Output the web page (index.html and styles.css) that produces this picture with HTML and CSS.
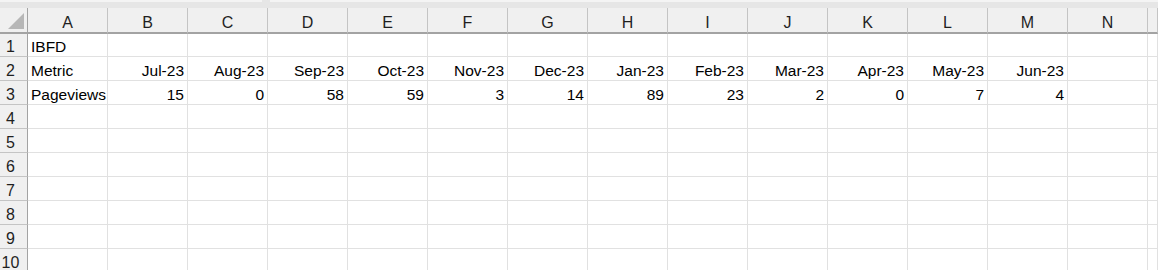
FILE: index.html
```
<!DOCTYPE html>
<html lang="en">
<head>
  <meta charset="UTF-8" />
  <meta name="viewport" content="width=device-width, initial-scale=1" />
  <title>Book1 - Sheet1</title>
  <link rel="stylesheet" href="styles.css">
</head>
<body>
  <div id="toolbar-edge">
    <span class="edge-bar edge-left"></span>
    <span class="edge-bar edge-right"></span>
  </div>

  <table id="sheet">
    <colgroup>
      <col class="col-rowhead" />
      <col /><col /><col /><col /><col /><col /><col />
      <col /><col /><col /><col /><col /><col /><col />
      <col class="col-edge" />
    </colgroup>
    <thead>
      <tr>
        <th class="corner"><span class="select-all"></span></th>
        <th>A</th><th>B</th><th>C</th><th>D</th><th>E</th><th>F</th><th>G</th>
        <th>H</th><th>I</th><th>J</th><th>K</th><th>L</th><th>M</th><th>N</th>
        <th></th>
      </tr>
    </thead>
    <tbody id="rows">
      <tr class="first">
        <th>1</th>
        <td>IBFD</td><td></td><td></td><td></td><td></td><td></td><td></td>
        <td></td><td></td><td></td><td></td><td></td><td></td><td></td><td></td>
      </tr>
      <tr>
        <th>2</th>
        <td>Metric</td>
        <td class="num">Jul-23</td><td class="num">Aug-23</td><td class="num">Sep-23</td>
        <td class="num">Oct-23</td><td class="num">Nov-23</td><td class="num">Dec-23</td>
        <td class="num">Jan-23</td><td class="num">Feb-23</td><td class="num">Mar-23</td>
        <td class="num">Apr-23</td><td class="num">May-23</td><td class="num">Jun-23</td>
        <td></td><td></td>
      </tr>
      <tr>
        <th>3</th>
        <td>Pageviews</td>
        <td class="num">15</td><td class="num">0</td><td class="num">58</td>
        <td class="num">59</td><td class="num">3</td><td class="num">14</td>
        <td class="num">89</td><td class="num">23</td><td class="num">2</td>
        <td class="num">0</td><td class="num">7</td><td class="num">4</td>
        <td></td><td></td>
      </tr>
    </tbody>
  </table>

  <script>
    // empty rows 4-10
    var body = document.getElementById('rows');
    for (var r = 4; r <= 10; r++) {
      var tr = document.createElement('tr');
      var th = document.createElement('th');
      th.textContent = r;
      tr.appendChild(th);
      for (var c = 0; c < 15; c++) {
        tr.appendChild(document.createElement('td'));
      }
      body.appendChild(tr);
    }
  </script>
</body>
</html>
```

FILE: styles.css
```
html, body {
  margin: 0;
  overflow: hidden;
  background: white;
}

body {
  font-family: "Liberation Sans", Arial, sans-serif;
  font-size: 15.5px;
  color: #000;
}

#toolbar-edge {
  height: 8px;
  background: #e6e6e6;
  display: flex;
  gap: 8px;
}

.edge-bar {
  height: 2px;
  background: #f4f4f4;
}

.edge-left {
  width: 262px;
}

.edge-right {
  flex: 1;
}

#sheet {
  border-collapse: separate;
  border-spacing: 0;
  table-layout: fixed;
  width: 1158px;
}

#sheet col {
  width: 80px;
}

#sheet col.col-rowhead {
  width: 28px;
}

#sheet col.col-edge {
  width: 10px;
}

#sheet th,
#sheet td {
  padding: 0 3px;
  line-height: 18px;
  vertical-align: bottom;
  white-space: nowrap;
  overflow: hidden;
  box-sizing: border-box;
}

#sheet thead th {
  height: 26px;
  background: #f0f0f0;
  font-weight: normal;
  font-size: 16px;
  color: #1f1f1f;
  text-align: center;
  border-right: 1px solid #c4c4c4;
  border-bottom: 2px solid #a3a3a3;
}

#sheet tbody th {
  background: #f0f0f0;
  font-weight: normal;
  font-size: 16px;
  color: #1f1f1f;
  text-align: center;
  padding: 0 6px 0 0;
  border-right: 1px solid #a3a3a3;
  border-bottom: 1px solid #c4c4c4;
}

#sheet .corner {
  border-right: 1px solid #a3a3a3;
  text-align: right;
  padding: 0 3px 3px 0;
}

.select-all {
  display: inline-block;
  width: 16px;
  height: 16px;
  background: #b7b7b7;
  clip-path: polygon(100% 0, 100% 100%, 0 100%);
  vertical-align: bottom;
}

#sheet td {
  height: 24px;
  border-right: 1px solid #e1e1e1;
  border-bottom: 1px solid #e1e1e1;
  text-align: left;
}

#sheet tr.first td,
#sheet tr.first th {
  height: 23px;
}

#sheet td.num {
  text-align: right;
}
```
